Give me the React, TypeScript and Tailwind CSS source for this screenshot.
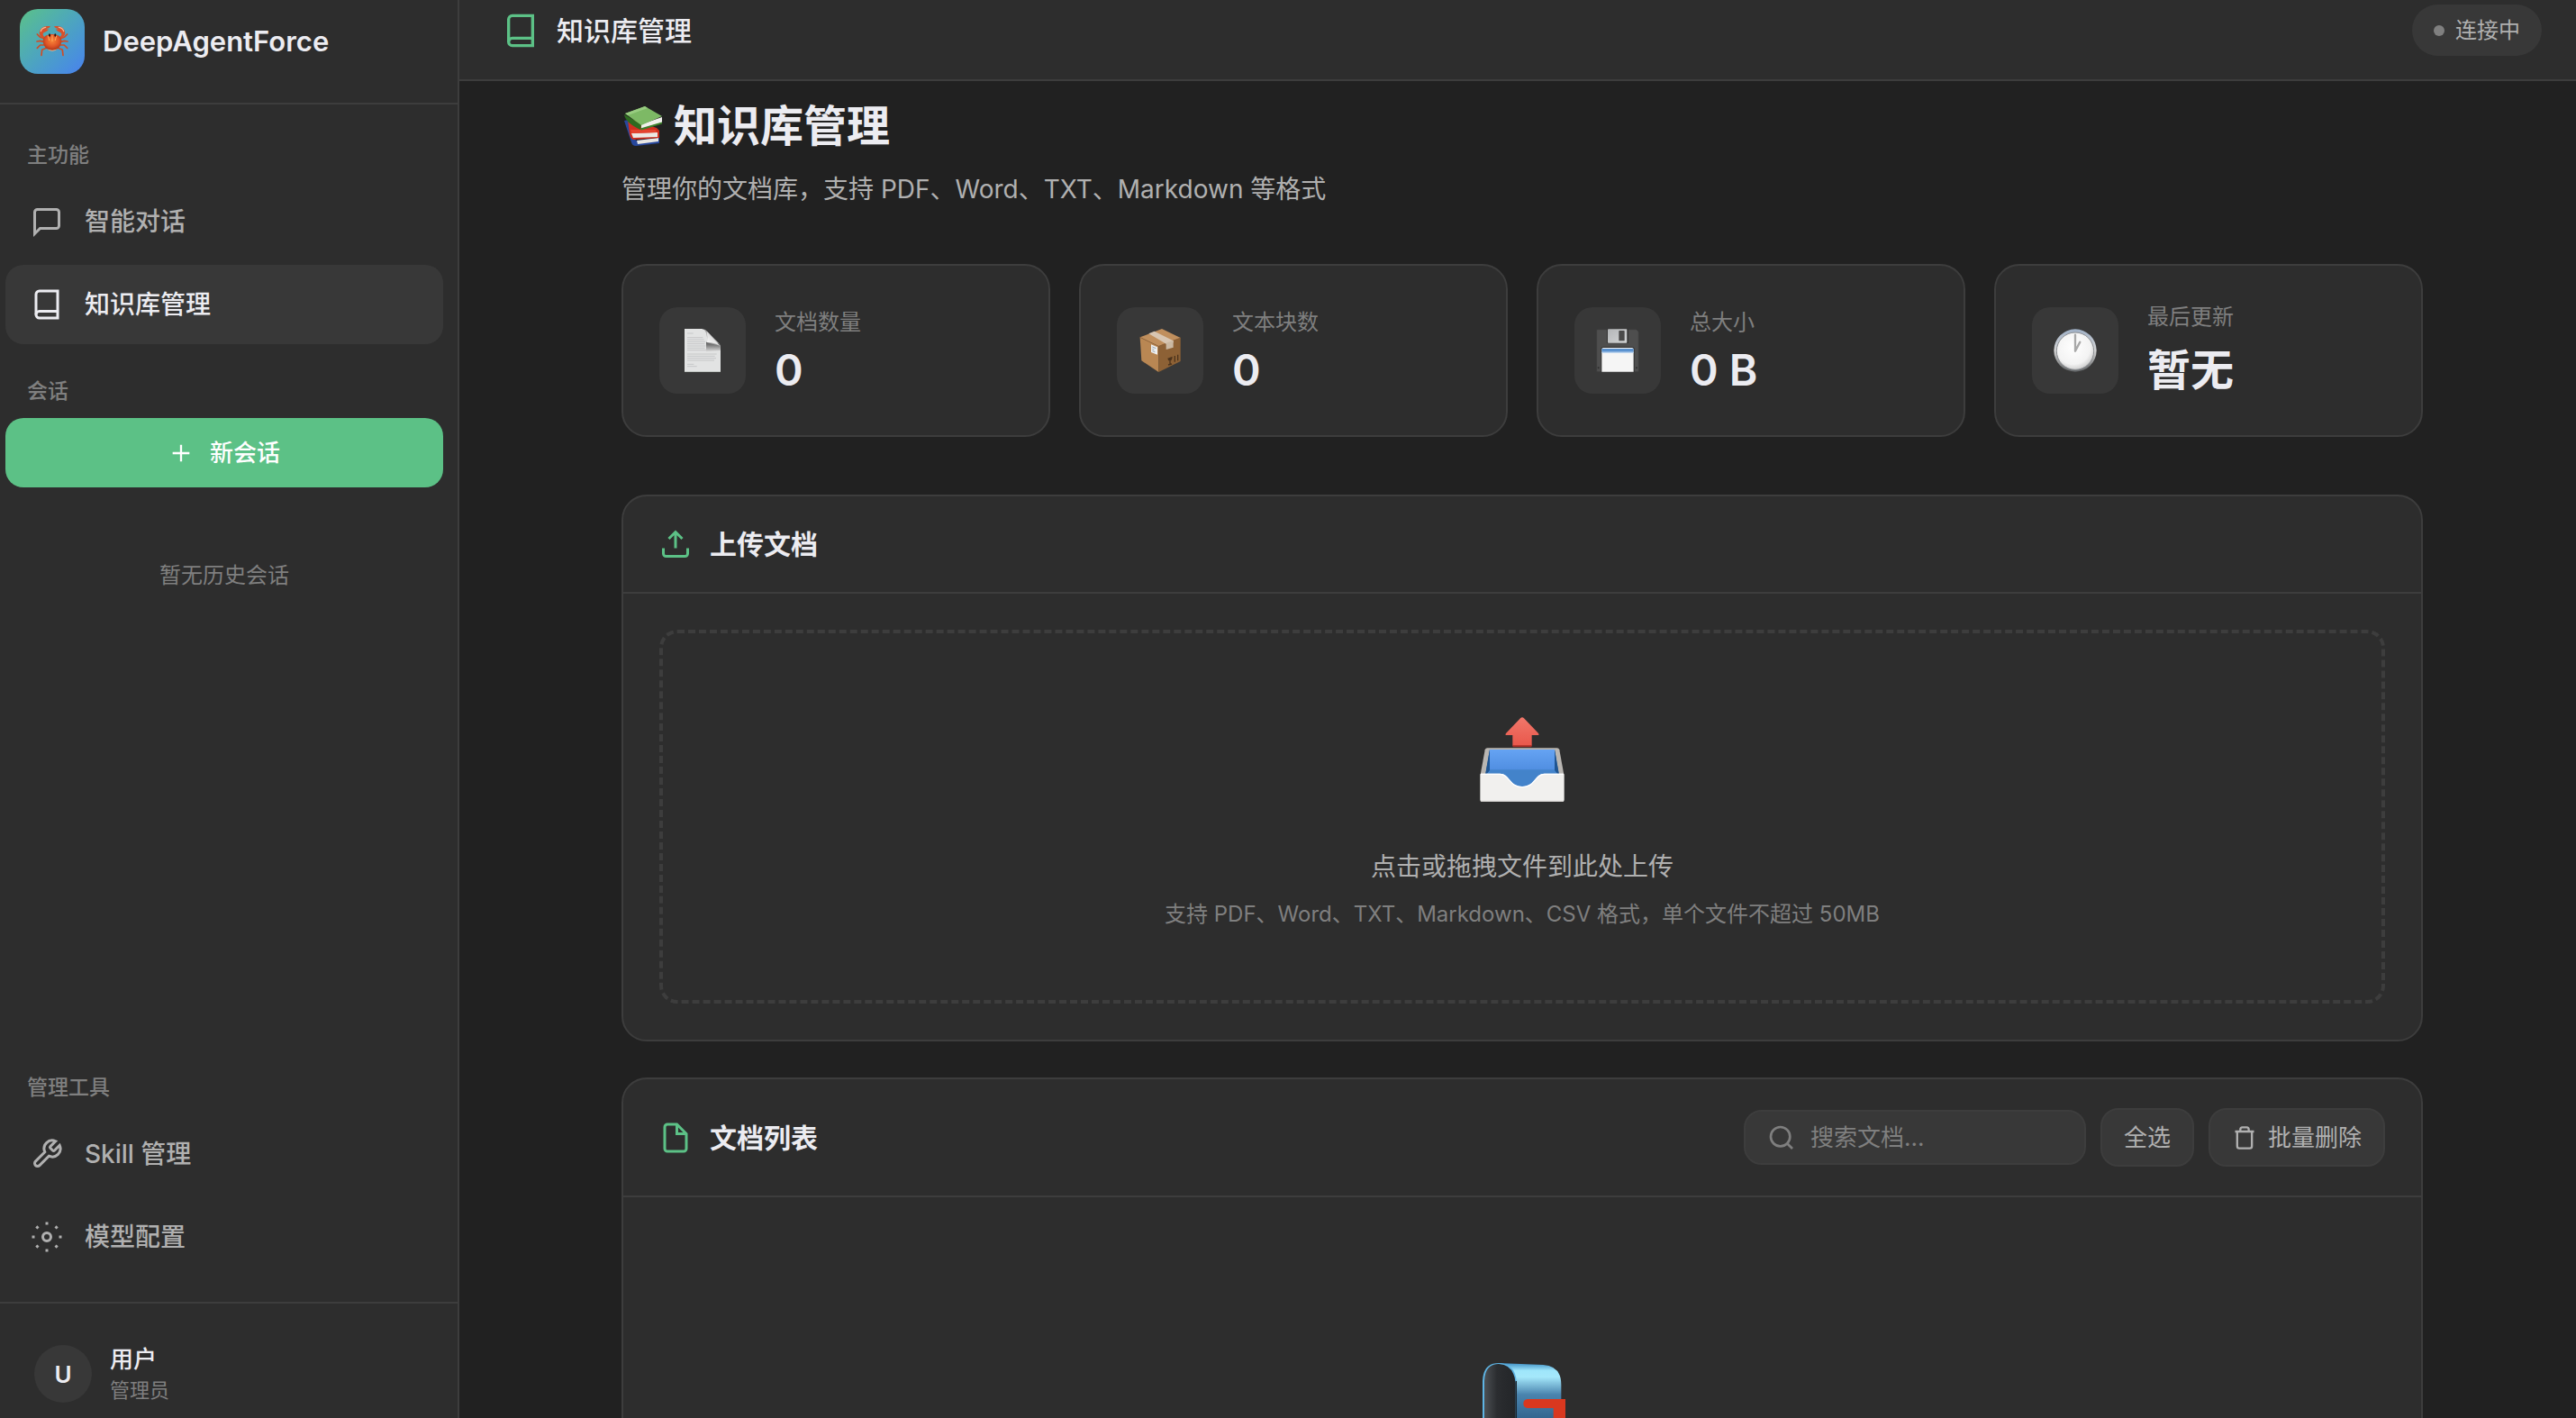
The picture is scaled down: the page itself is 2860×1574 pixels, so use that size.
import { useState } from 'react';
import type { ReactNode } from 'react';
import clsx from 'clsx';

interface IconProps {
  className?: string;
  children?: ReactNode;
}

function Icon({ className, children }: IconProps) {
  return (
    <svg viewBox="0 0 24 24" fill="none" stroke="currentColor" strokeWidth="2" aria-hidden="true" className={clsx('shrink-0', className)}>
      {children}
    </svg>
  );
}

const ChatIcon = ({ className }: IconProps) => (
  <Icon className={className}>
    <path d="M21 15a2 2 0 0 1-2 2H7l-4 4V5a2 2 0 0 1 2-2h14a2 2 0 0 1 2 2z" />
  </Icon>
);

const BookIcon = ({ className }: IconProps) => (
  <Icon className={className}>
    <path d="M4 19.5A2.5 2.5 0 0 1 6.5 17H20" />
    <path d="M6.5 2H20v20H6.5A2.5 2.5 0 0 1 4 19.5v-15A2.5 2.5 0 0 1 6.5 2z" />
  </Icon>
);

const WrenchIcon = ({ className }: IconProps) => (
  <Icon className={className}>
    <path d="M14.7 6.3a1 1 0 0 0 0 1.4l1.6 1.6a1 1 0 0 0 1.4 0l3.77-3.77a6 6 0 0 1-7.94 7.94l-6.91 6.91a2.12 2.12 0 0 1-3-3l6.91-6.91a6 6 0 0 1 7.94-7.94l-3.76 3.76z" />
  </Icon>
);

const ModelIcon = ({ className }: IconProps) => (
  <Icon className={className}>
    <circle cx="12" cy="12" r="3" />
    <path d="M12 1v2M12 21v2M4.22 4.22l1.42 1.42M18.36 18.36l1.42 1.42M1 12h2M21 12h2M4.22 19.78l1.42-1.42M18.36 5.64l1.42-1.42" />
  </Icon>
);

const PlusIcon = ({ className }: IconProps) => (
  <Icon className={className}>
    <path d="M12 4v16M4 12h16" />
  </Icon>
);

const UploadIcon = ({ className }: IconProps) => (
  <Icon className={className}>
    <path d="M21 15v4a2 2 0 0 1-2 2H5a2 2 0 0 1-2-2v-4" />
    <path d="M17 8l-5-5-5 5M12 3v12" />
  </Icon>
);

const FileIcon = ({ className }: IconProps) => (
  <Icon className={className}>
    <path d="M13 2H6a2 2 0 0 0-2 2v16a2 2 0 0 0 2 2h12a2 2 0 0 0 2-2V9z" />
    <path d="M13 2v7h7" />
  </Icon>
);

const SearchIcon = ({ className }: IconProps) => (
  <Icon className={className}>
    <circle cx="11" cy="11" r="8" />
    <path d="M21 21l-4.35-4.35" />
  </Icon>
);

const TrashIcon = ({ className }: IconProps) => (
  <Icon className={className}>
    <path d="M3 6h18M19 6v14a2 2 0 0 1-2 2H7a2 2 0 0 1-2-2V6m3 0V4a2 2 0 0 1 2-2h4a2 2 0 0 1 2 2v2" />
  </Icon>
);

function Crab() {
  return (
    <svg viewBox="0 0 108 108" className="size-9" aria-hidden="true">
      <defs>
        <radialGradient id="crab" cx=".5" cy=".4" r=".6">
          <stop offset="0" stopColor="#f98638" />
          <stop offset=".6" stopColor="#de5427" />
          <stop offset="1" stopColor="#a83417" />
        </radialGradient>
      </defs>
      <g fill="none" stroke="#cf4c26" strokeWidth="5" strokeLinecap="round" strokeLinejoin="round">
        <path d="M30 46L14 40 4 30M28 56L14 52 3 54M28 66L14 66 4 76M34 76L20 82 18 100" />
        <path d="M78 46l16-6 10-10M80 56l14-4 11 2M80 66l14 0 10 10M74 76l14 6 2 18" />
      </g>
      <path d="M30 46C6 40 6 16 24 6c8-4 16-4 24-2-4 6-10 6-15 9 4 1 8 1 10 0-4 8-14 9-19 13-3 5 0 12 12 16z" fill="#d95029" />
      <path d="M78 46c24-6 24-30 6-40-8-4-16-4-24-2 4 6 10 6 15 9-4 1-8 1-10 0 4 8 14 9 19 13 3 5 0 12-12 16z" fill="#d95029" />
      <path d="M16 20c2-7 8-12 16-13M92 20c-2-7-8-12-16-13" fill="none" stroke="#f7b795" strokeWidth="4" strokeLinecap="round" />
      <path d="M23 50C24 36 38 30 54 30s30 6 31 20c0 18-12 34-31 34S23 68 23 50z" fill="url(#crab)" />
      <path d="M40 36l4 14M54 34v18M68 36l-4 14" stroke="#ffab5e" strokeWidth="3" strokeLinecap="round" />
      <path d="M36 79q18 8 36 0-7 7-18 7t-18-7z" fill="#f0b78c" />
      <ellipse cx="45" cy="33" rx="3" ry="5" fill="#26130e" />
      <ellipse cx="64" cy="33" rx="3" ry="5" fill="#26130e" />
    </svg>
  );
}

function Books() {
  return (
    <svg viewBox="0 0 44 44" className="size-11 shrink-0" aria-hidden="true">
      <path d="M1 16l4-1 9 23 26-3v6l-26 3q-4 0-5-4z" fill="#27479c" />
      <path d="M15 38l24-3 0 4-23 3z" fill="#e8e6e2" />
      <path d="M5 15l3-1 29 10 3 3v8l-29 2q-3-1-4-6z" fill="#cf2f1f" />
      <path d="M9 30l29-1 0 5-27 1z" fill="#ece9e4" />
      <path d="M8 26l28 0 1 3-28 1z" fill="#e5432e" />
      <path d="M1 9L20 20l-1 6Q2 18 1 9z" fill="#2c6a1f" />
      <path d="M20 20L43 12v6L20 25z" fill="#f1f0ec" />
      <path d="M19 24.500l24-7 0 2-23 7z" fill="#3b7f2a" />
      <path d="M2 8L24 0 43 11 20 21z" fill="#7db965" />
      <path d="M2 8L24 0l3 2L5 10z" fill="#98cc80" />
    </svg>
  );
}

function PageArt() {
  return (
    <svg viewBox="0 0 144 144" className="size-12" aria-hidden="true">
      <defs>
        <linearGradient id="page-fold" x1="0" y1="1" x2=".7" y2="0">
          <stop offset="0" stopColor="#ffffff" />
          <stop offset="1" stopColor="#c9c9c9" />
        </linearGradient>
        <linearGradient id="page-shade" x1="0" y1="1" x2="0" y2="0">
          <stop offset="0" stopColor="#dcdcdc" />
          <stop offset=".7" stopColor="#777777" />
          <stop offset="1" stopColor="#5e5e5e" />
        </linearGradient>
      </defs>
      <path d="M12 0h58q10 2 20 12l36 36q6 6 6 14v82H12z" fill="#e2e3e3" />
      <path d="M12 143h120" stroke="#a5aaa5" strokeWidth="2" />
      <path d="M84 76V44l42 4q6 6 6 14v10z" fill="url(#page-shade)" />
      <path d="M74 0q16 10 13 46L130 56 90 12Q82 2 74 0z" fill="#a7a7a7" />
      <path d="M86 8q3 16 1 37 24 0 42 11L92 14z" fill="url(#page-fold)" />
      <path d="M21 15h20M21 29h52M21 36h56M21 43h60M21 50h58M21 57h61M21 64h59M21 71h63M21 84h98M21 91h92M21 98h96M21 105h90M21 118h22M21 125h32" stroke="#c6c7c8" strokeWidth="3" />
    </svg>
  );
}

function BoxArt() {
  return (
    <svg viewBox="0 0 144 144" className="size-12" aria-hidden="true">
      <path d="M5 28L67 58v86L10 106z" fill="#b98753" />
      <path d="M140 30L67 58v86l73-36z" fill="#8d6135" />
      <path d="M5 28L78 0l62 30-73 28z" fill="#c08f5d" />
      <path d="M5 28l62 30 73-28" fill="none" stroke="#8b5d33" strokeWidth="2" />
      <path d="M34 16l19-8 63 32v6l-24 4z" fill="#d8c6b2" />
      <path d="M92 47l24-8v23l-24 7z" fill="#cbb9a3" />
      <path d="M42 52l21 9v25l-21-8z" fill="#eef0f1" />
      <path d="M46 60l12 5M46 67l6 2M46 73l9 4" stroke="#9aa3aa" strokeWidth="3" />
      <path d="M105 108v12M99 120l12-3M121 90v20M131 86v20" fill="none" stroke="#4c331c" strokeWidth="4" />
      <path d="M97 98l16-6q0 12-8 16-7-1-8-10z" fill="#4c331c" />
    </svg>
  );
}

function FloppyArt() {
  return (
    <svg viewBox="0 0 144 144" className="size-12" aria-hidden="true">
      <defs>
        <linearGradient id="shutter" x1="0" y1="0" x2="1" y2="1">
          <stop offset="0" stopColor="#b4b6b8" />
          <stop offset="1" stopColor="#d2d4d5" />
        </linearGradient>
      </defs>
      <path d="M2 2h132l8 8v133H2z" fill="#4e4e4e" />
      <path d="M2 2h132l8 8v133H2z" fill="none" stroke="#3b3b3b" strokeWidth="2" />
      <path d="M36 0h72v48H36z" fill="#333333" />
      <rect x="39" y="1" width="64" height="46" rx="2" fill="url(#shutter)" />
      <rect x="76" y="6" width="19" height="34" rx="2" fill="#4a4a4a" />
      <path d="M16 68q0-8 8-8h96q8 0 8 8v76H16z" fill="#303030" />
      <path d="M19 68q0-5 5-5h96q5 0 5 5v75H19z" fill="#f5f5f5" />
      <path d="M19 66h106v11H19z" fill="#5a92d0" />
      <path d="M19 77h106v4H19z" fill="#bcd4ee" />
      <circle cx="8" cy="130" r="3" fill="#2d2d2d" />
      <circle cx="135" cy="130" r="3" fill="#2d2d2d" />
    </svg>
  );
}

function ClockArt() {
  return (
    <svg viewBox="0 0 144 144" className="size-12" aria-hidden="true">
      <defs>
        <linearGradient id="clock-rim" x1="0" y1="0" x2="0" y2="1">
          <stop offset="0" stopColor="#9fb0c6" />
          <stop offset=".5" stopColor="#d5d5d5" />
          <stop offset="1" stopColor="#5f6264" />
        </linearGradient>
        <radialGradient id="clock-face" cx=".45" cy=".4" r=".65">
          <stop offset="0" stopColor="#ffffff" />
          <stop offset=".7" stopColor="#f3f3f3" />
          <stop offset="1" stopColor="#c4c4c4" />
        </radialGradient>
      </defs>
      <circle cx="72" cy="72" r="71" fill="url(#clock-rim)" />
      <circle cx="72" cy="74" r="62" fill="url(#clock-face)" stroke="#8c8f93" strokeWidth="3" />
      <path d="M72 20v54l16-30" fill="none" stroke="#a9a9a9" strokeWidth="7" strokeLinecap="round" strokeLinejoin="round" />
    </svg>
  );
}

function OutboxArt() {
  return (
    <svg viewBox="0 0 288 288" className="size-24" aria-hidden="true">
      <defs>
        <linearGradient id="outbox-back" x1="0" y1="0" x2="0" y2="1">
          <stop offset="0" stopColor="#65a3f3" />
          <stop offset="1" stopColor="#4f8de0" />
        </linearGradient>
        <linearGradient id="outbox-arrow" x1="0" y1="0" x2="0" y2="1">
          <stop offset="0" stopColor="#f0776a" />
          <stop offset="1" stopColor="#e9574b" />
        </linearGradient>
      </defs>
      <path d="M144 4q3 0 6 3l48 50q4 6-2 6h-20v34q0 3-3 3h-58q-3 0-3-3V63H92q-6 0-2-6l48-50q3-3 6-3z" fill="url(#outbox-arrow)" />
      <path d="M112 97h64v3q0 3-3 3h-58q-3 0-3-3z" fill="#a92f26" />
      <path d="M28 106h232q6 0 8 6l15 82H5l15-82q2-6 8-6z" fill="#b9b6b2" />
      <path d="M36 111h216l15 83v46H21v-46z" fill="#1f5592" />
      <path d="M36 111h216v72H36z" fill="url(#outbox-back)" />
      <path d="M36 178h216l12 16v44H24v-44z" fill="#4383ca" />
      <path d="M36 111v68l-13 17v-8zM252 111v68l13 17v-8z" fill="#1f5592" />
      <path d="M8 191h62c32 0 30 43 74 43s42-43 74-43h62q4 0 4 4v84q0 6-6 6H10q-6 0-6-6v-84q0-4 4-4z" fill="#f1f0ee" />
      <path d="M6 193h64c32 0 30 43 74 43s42-43 74-43h64" fill="none" stroke="#ffffff" strokeWidth="4" />
      <path d="M6 283h276" stroke="#c9c7c4" strokeWidth="3" />
    </svg>
  );
}

function MailboxArt() {
  return (
    <svg viewBox="0 0 288 288" className="size-24" aria-hidden="true">
      <defs>
        <linearGradient id="mailbox-side" x1="0" y1="0" x2="0" y2="1">
          <stop offset="0" stopColor="#3f8fc4" />
          <stop offset=".12" stopColor="#9fe6fb" />
          <stop offset=".22" stopColor="#a5e8fb" />
          <stop offset=".5" stopColor="#4a84ae" />
          <stop offset="1" stopColor="#2b5c85" />
        </linearGradient>
        <linearGradient id="mailbox-inside" x1="0" y1="0" x2="1" y2="0">
          <stop offset="0" stopColor="#4c5054" />
          <stop offset=".4" stopColor="#2b2d30" />
          <stop offset="1" stopColor="#232528" />
        </linearGradient>
      </defs>
      <path d="M64 6l150 6q60 4 60 66v138H124V66z" fill="url(#mailbox-side)" />
      <path d="M12 216V66Q14 6 66 6q56 2 60 66v144z" fill="#5eb4e4" />
      <path d="M18 216V66Q20 9 66 9q50 2 56 63v144z" fill="url(#mailbox-inside)" />
      <path d="M124 66v150" stroke="#17222c" strokeWidth="4" />
      <path d="M162 126h126v92h-40v-62h-86q-14-2-14-15t14-15z" fill="#d9381f" />
      <path d="M120 216h54v72h-54z" fill="#8a6544" />
    </svg>
  );
}

const mainNav = [
  { id: 'chat', label: '智能对话', icon: ChatIcon },
  { id: 'knowledge', label: '知识库管理', icon: BookIcon },
];

const toolNav = [
  { id: 'skill', label: 'Skill 管理', icon: WrenchIcon },
  { id: 'model', label: '模型配置', icon: ModelIcon },
];

const stats = [
  { label: '文档数量', value: '0', art: <PageArt /> },
  { label: '文本块数', value: '0', art: <BoxArt /> },
  { label: '总大小', value: '0 B', art: <FloppyArt /> },
  { label: '最后更新', value: '暂无', art: <ClockArt />, tall: true },
];

interface NavGroupProps {
  title: string;
  items: typeof mainNav;
  active: string;
  onSelect: (id: string) => void;
}

function NavGroup({ title, items, active, onSelect }: NavGroupProps) {
  return (
    <div>
      <GroupLabel>{title}</GroupLabel>
      <div className="flex flex-col gap-1">
        {items.map(({ id, label, icon: ItemIcon }) => (
          <button
            key={id}
            type="button"
            onClick={() => onSelect(id)}
            className={clsx(
              'flex items-center gap-6 rounded-[20px] px-7 py-[26px] text-left text-[28px] leading-9 font-medium',
              active === id ? 'bg-[#383838] text-[#ececf1]' : 'text-[#b0b0b0] hover:bg-[#333333]'
            )}
          >
            <ItemIcon className="size-9" />
            {label}
          </button>
        ))}
      </div>
    </div>
  );
}

function GroupLabel({ children }: { children: ReactNode }) {
  return <h2 className="mb-3.5 px-6 text-[23px] leading-8 font-medium text-[#7f7f7f]">{children}</h2>;
}

function PanelTitle({ icon, children }: { icon: ReactNode; children: ReactNode }) {
  return (
    <h2 className="flex items-center gap-5 text-[30px] leading-10 font-semibold text-[#ececf1]">
      {icon}
      {children}
    </h2>
  );
}

export default function App() {
  const [active, setActive] = useState('knowledge');
  const [query, setQuery] = useState('');

  return (
    <div className="flex h-screen overflow-hidden bg-[#212121] font-['Inter','Noto_Sans_CJK_SC',sans-serif] text-[#ececf1]">
      {/* Sidebar */}
      <aside className="flex w-[510px] shrink-0 flex-col border-r-2 border-[#3d3d3d] bg-[#2d2d2d]">
        <div className="flex items-center gap-5 border-b-2 border-[#3d3d3d] px-[22px] pt-2.5 pb-8">
          <div className="flex size-[72px] items-center justify-center rounded-[20px] bg-linear-135 from-[#5cc186] to-[#4a80ee]">
            <Crab />
          </div>
          <span className="text-[31px] leading-10 font-semibold">DeepAgentForce</span>
        </div>

        <nav className="flex flex-1 flex-col pt-10 pr-4 pb-7 pl-1.5">
          <NavGroup title="主功能" items={mainNav} active={active} onSelect={setActive} />

          <div className="pt-9">
            <GroupLabel>会话</GroupLabel>
            <button
              type="button"
              className="flex w-full items-center justify-center gap-[18px] rounded-[20px] bg-[#5cc186] py-5 text-[26px] leading-[37px] font-medium text-white"
            >
              <PlusIcon className="size-7" />
              新会话
            </button>
            <p className="mt-20 text-center text-2xl leading-9 text-[#7f7f7f]">暂无历史会话</p>
          </div>

          <div className="mt-auto">
            <NavGroup title="管理工具" items={toolNav} active={active} onSelect={setActive} />
          </div>
        </nav>

        <div className="flex items-center gap-5 border-t-2 border-[#3d3d3d] px-[38px] pt-11 pb-[15px]">
          <div className="flex size-16 items-center justify-center rounded-full bg-[#383838] text-[26px] font-semibold">U</div>
          <div>
            <p className="text-[26px] leading-9 font-medium">用户</p>
            <p className="text-[22px] leading-8 text-[#7f7f7f]">管理员</p>
          </div>
        </div>
      </aside>

      <main className="flex min-w-0 flex-1 flex-col">
        {/* Top bar */}
        <header className="flex items-center justify-between border-b-2 border-[#3d3d3d] bg-[#2d2d2d] pt-[5px] pr-[38px] pb-[26px] pl-12">
          <div className="flex items-center gap-5">
            <BookIcon className="size-10 text-[#5cc186]" />
            <span className="text-[30px] leading-10 font-medium">知识库管理</span>
          </div>
          <div className="flex items-center gap-3 rounded-full bg-[#383838] px-6 py-3 text-2xl leading-[33px] text-[#b0b0b0]">
            <span className="size-3 rounded-full bg-[#7f7f7f]" />
            连接中
          </div>
        </header>

        <div className="flex-1 overflow-hidden pl-2.5">
          <div className="mx-auto max-w-[2000px] pt-4">
            <h1 className="flex items-center gap-3 pl-0.5 text-5xl leading-[68px] font-semibold">
              <Books />
              知识库管理
            </h1>
            <p className="mt-4 text-[28px] leading-10 text-[#b0b0b0]">管理你的文档库，支持 PDF、Word、TXT、Markdown 等格式</p>

            {/* Stats */}
            <div className="mt-[63px] grid grid-cols-4 gap-8">
              {stats.map((stat) => (
                <div key={stat.label} className="flex items-center gap-8 rounded-[28px] border-2 border-[#3d3d3d] bg-[#2d2d2d] px-10 py-[38px]">
                  <div className="flex size-24 shrink-0 items-center justify-center rounded-[20px] bg-[#383838]">{stat.art}</div>
                  <div className="flex flex-col gap-1.5">
                    <p className="text-2xl leading-[38px] text-[#7f7f7f]">{stat.label}</p>
                    <p className={clsx('text-5xl font-semibold', stat.tall ? 'leading-[68px]' : 'leading-14')}>{stat.value}</p>
                  </div>
                </div>
              ))}
            </div>

            {/* Upload */}
            <section className="mt-16 rounded-[28px] border-2 border-[#3d3d3d] bg-[#2d2d2d]">
              <div className="border-b-2 border-[#3d3d3d] px-10 py-[33px]">
                <PanelTitle icon={<UploadIcon className="size-9 text-[#5cc186]" />}>上传文档</PanelTitle>
              </div>
              <div className="p-10">
                <label className="relative flex cursor-pointer flex-col items-center rounded-[20px] border-4 border-dashed border-[#3d3d3d] pt-[92px] pb-[77px]">
                  <input type="file" multiple className="sr-only" />
                  <OutboxArt />
                  <span className="mt-[51px] text-[28px] leading-10 text-[#b0b0b0]">点击或拖拽文件到此处上传</span>
                  <span className="mt-[15px] text-2xl leading-9 text-[#7f7f7f]">
                    支持 PDF、Word、TXT、Markdown、CSV 格式，单个文件不超过 50MB
                  </span>
                </label>
              </div>
            </section>

            {/* Document list */}
            <section className="mt-10 rounded-[28px] border-2 border-[#3d3d3d] bg-[#2d2d2d]">
              <div className="flex items-center justify-between border-b-2 border-[#3d3d3d] px-10 py-8">
                <PanelTitle icon={<FileIcon className="size-9 text-[#5cc186]" />}>文档列表</PanelTitle>
                <div className="flex items-center gap-4 text-[26px] leading-[37px] text-[#b0b0b0]">
                  <label className="flex w-[380px] items-center gap-4 rounded-[20px] border-2 border-[#3d3d3d] bg-[#383838] px-6 py-2.5 text-[#7f7f7f]">
                    <SearchIcon className="size-8" />
                    <input
                      type="text"
                      aria-label="搜索文档"
                      placeholder="搜索文档..."
                      value={query}
                      onChange={(e) => setQuery(e.target.value)}
                      className="min-w-0 flex-1 bg-transparent text-[#ececf1] outline-none placeholder:text-[#7f7f7f]"
                    />
                  </label>
                  <button type="button" className="rounded-[20px] border-2 border-[#3d3d3d] bg-[#383838] px-6 py-3">
                    全选
                  </button>
                  <button type="button" className="flex items-center gap-3 rounded-[20px] border-2 border-[#3d3d3d] bg-[#383838] px-6 py-3">
                    <TrashIcon className="size-7" />
                    批量删除
                  </button>
                </div>
              </div>
              <div className="flex flex-col items-center pt-[182px] pb-40">
                <MailboxArt />
              </div>
            </section>
          </div>
        </div>
      </main>
    </div>
  );
}
